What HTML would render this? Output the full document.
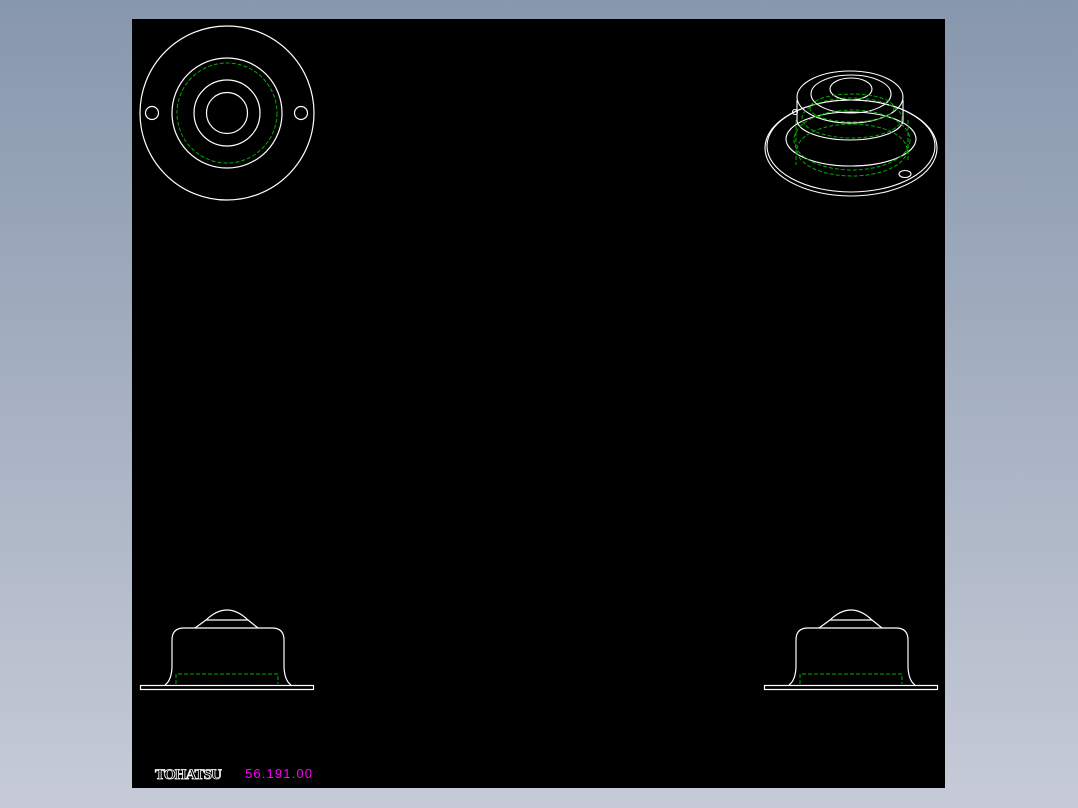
<!DOCTYPE html>
<html><head><style>
html,body{margin:0;padding:0;}
body{width:1078px;height:808px;background:linear-gradient(#8797ad,#c6cbd7);position:relative;overflow:hidden;}
svg{position:absolute;left:0;top:0;}
</style></head><body>
<svg width="1078" height="808" xmlns="http://www.w3.org/2000/svg">
<rect x="132" y="19" width="813" height="769" fill="#000"/>
<g fill="none" stroke="#fff" stroke-width="1.2">
<circle cx="227" cy="113" r="87"/>
<circle cx="227" cy="113" r="55"/>
<circle cx="227" cy="113" r="33"/>
<circle cx="227" cy="113" r="20.5"/>
<circle cx="152" cy="113" r="6.5"/>
<circle cx="301" cy="113" r="6.5"/>
</g>
<circle cx="227" cy="113" r="50" fill="none" stroke="#0a0" stroke-dasharray="4,2"/>
<!-- iso view -->
<g fill="none" stroke="#fff" stroke-width="1.1">
<ellipse cx="851" cy="148" rx="86" ry="48"/>
<ellipse cx="851" cy="146" rx="84" ry="46"/>
<ellipse cx="851" cy="139" rx="65" ry="27"/>
<ellipse cx="850" cy="97" rx="53" ry="26"/>
<ellipse cx="851" cy="94" rx="40" ry="19"/>
<ellipse cx="851" cy="89" rx="21" ry="11"/>
<path d="M797 100 L797 120 M903 100 L903 120"/>
<path d="M797 120 A53 20 0 0 0 903 120"/>
<ellipse cx="905" cy="174" rx="6" ry="3.5"/>
<ellipse cx="795" cy="112" rx="2.5" ry="2.5"/>
</g>
<g fill="none" stroke="#0a0" stroke-dasharray="4,2">
<ellipse cx="852" cy="140" rx="58" ry="30"/>
<ellipse cx="852" cy="118" rx="50" ry="20"/>
<ellipse cx="852" cy="150" rx="55" ry="26"/>
<ellipse cx="852" cy="108" rx="42" ry="14"/>
<path d="M796 120 L796 165 M908 120 L908 160"/>
</g>
<!-- side views -->
<g id="sv" fill="none" stroke="#fff" stroke-width="1.2">
<rect x="140.5" y="685.5" width="173" height="4"/>
<path d="M165 685 Q172 680 172 665 L172 640 Q172 628 184 628 L272 628 Q284 628 284 640 L284 665 Q284 680 291 685"/>
<path d="M195 628 L206 620 Q227 600 248 620 L258 628 M206 620 L248 620"/>
</g>
<path d="M176 684 L176 674 L278 674 L278 684" fill="none" stroke="#0a0" stroke-dasharray="4,2"/>
<use href="#sv" x="624"/>
<path d="M800 684 L800 674 L902 674 L902 684" fill="none" stroke="#0a0" stroke-dasharray="4,2"/>
<text x="155" y="779" font-family="Liberation Serif,serif" font-weight="bold" font-size="15" fill="#000" stroke="#fff" stroke-width="0.8" textLength="67">TOHATSU</text>
<text x="245" y="778" font-family="Liberation Sans,sans-serif" font-size="13" fill="#f0f" textLength="67">56.191.00</text>
</svg>
</body></html>
